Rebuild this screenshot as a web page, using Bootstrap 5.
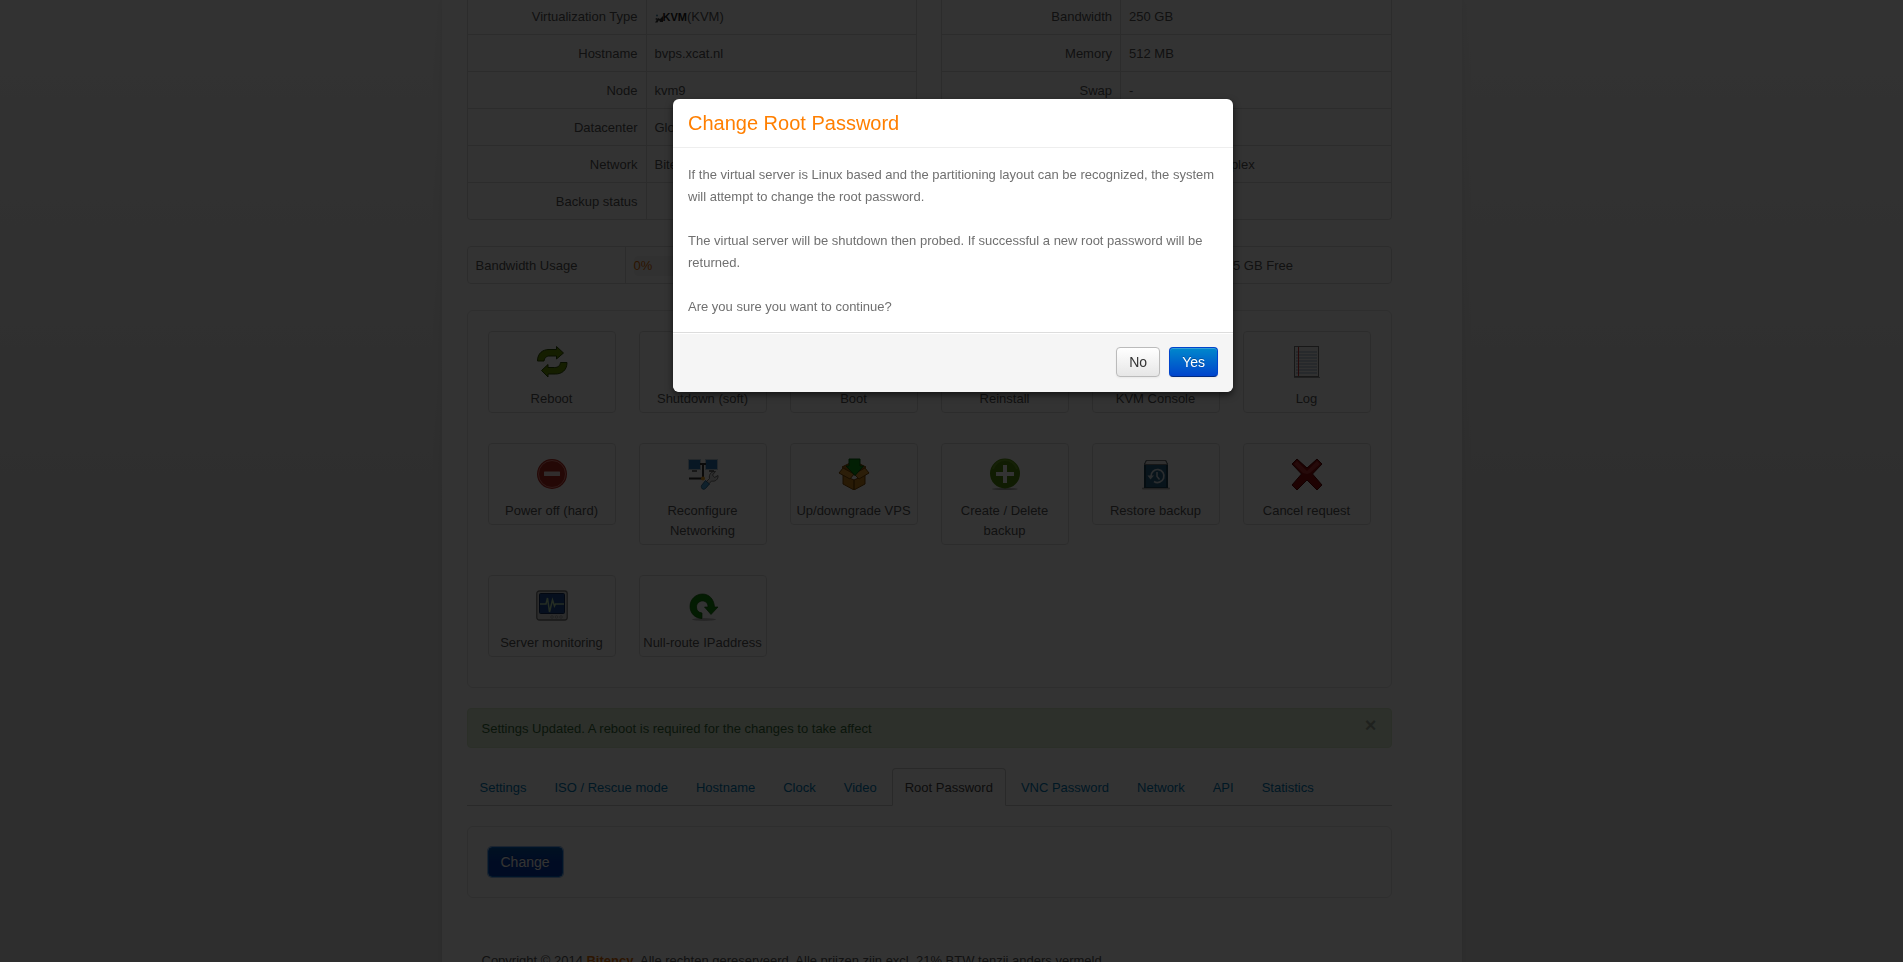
<!DOCTYPE html>
<html lang="en">
<head>
<meta charset="utf-8">
<meta name="viewport" content="width=device-width, initial-scale=1">
<title>Change Root Password</title>
<link href="https://cdn.jsdelivr.net/npm/bootstrap@5.3.0/dist/css/bootstrap.min.css" rel="stylesheet">
<style>
body { font: 13px/20px "Liberation Sans", Arial, sans-serif; color: #555; background: linear-gradient(#fafafa, #e6e6e6 500px, #e6e6e6); min-height: 100vh; }
a { color: #08c; text-decoration: none; }
.page-wrap { max-width: 1020px; background: #fff; box-shadow: 0 0 10px rgba(0,0,0,.08); padding: 0 70px 20px 25px; min-height: 100vh; }
.info-pair { display: grid; grid-template-columns: 1fr 1fr; column-gap: 24px; }
.info-table { border-collapse: separate; border-spacing: 0; width: 100%; border: 1px solid #ddd; border-radius: 4px; table-layout: fixed; }
.info-table th { font-weight: 400; text-align: right; width: 178px; }
.info-table td, .info-table th { padding: 9px 8px 7px; border-top: 1px solid #ddd; height: 37px; }
.info-table td { border-left: 1px solid #ddd; }
.info-table.cut { border-top: 0; border-radius: 0 0 4px 4px; }
.info-table tr:first-child > * { border-top: 0; }
.info-table.cut tr:first-child > * { padding-top: 7px; height: 34px; }
.info-table.usage-table { margin-top: 26px; }
.usage-table tr:first-child > * { height: 36px; }
.usage-table th { width: 157px; text-align: left; }
.usage-table .free-cell { width: 199px; }
.usage-bar { background: #f5f5f5; height: 20px; border-radius: 4px; color: #e06c00; }
.kvm-logo { color: #222; font-size: 11px; font-weight: 700; }
.well-box { border: 1px solid #e3e3e3; border-radius: 6px; padding: 20px; margin-top: 20px; }
.tile-grid { display: grid; grid-template-columns: repeat(6, 1fr); gap: 30px 23px; align-items: start; margin-top: 26px; padding-bottom: 30px; }
.tile { display: block; border: 1px solid #ddd; border-radius: 4px; padding: 14px 3px 3px; color: #555; text-align: center; }
.tile svg { display: block; width: 32px; height: 32px; margin: 0 auto 11px; }
.notice { background: #dff0d8; border: 1px solid #d6e9c6; border-radius: 4px; color: #356b36; padding: 10px 14px 8px; margin-top: 20px; }
.notice-close { background: none; border: 0; padding: 0; line-height: 12px; font-size: 20px; font-weight: 700; color: #000; opacity: .3; }
.setting-tabs { margin-top: 20px; border-bottom: 1px solid #ccc; }
.setting-tabs .nav-link { padding: 9px 12px 7px; border: 1px solid transparent; border-radius: 4px 4px 0 0; margin: 0 2px -1px 0; color: #0077b3; }
.setting-tabs .nav-link.active { color: #444; border-color: #ccc #ccc #fff; background: #fff; }
.btn-old { font-size: 14px; line-height: 20px; padding: 4px 12px; border-radius: 4px; border: 1px solid #bbb; background: linear-gradient(#fff, #e6e6e6); color: #333; box-shadow: inset 0 1px 0 rgba(255,255,255,.2), 0 1px 2px rgba(0,0,0,.05); }
.btn-old.btn-main { color: #fff; border-color: #04c #04c #002a80; background: linear-gradient(#08c, #04c); text-shadow: 0 -1px 0 rgba(0,0,0,.25); }
.btn-old.btn-main.is-focused { background: linear-gradient(#05a, #003ab0 50%); border-color: #06c; box-shadow: 0 0 0 1px #8ab4e8; }
.legal { margin: 53px 15px 0; }
.legal a { color: #e06c00; font-weight: 700; }
.modal { padding-left: 3px; }
.modal-backdrop { --bs-backdrop-opacity: .8; }
.modal-dialog { max-width: 560px; margin: 99px auto 0; }
.modal-content { border: 0; border-radius: 6px; box-shadow: 0 3px 7px rgba(0,0,0,.6); overflow: hidden; color: #707070; }
.modal-header { padding: 9px 15px; border-bottom: 1px solid #eee; }
.modal-title { font-size: 20px; line-height: 30px; font-weight: 400; color: #ff7f00; }
.modal-body { padding: 16px 15px 14px; line-height: 22px; }
.modal-body p { margin: 0 0 22px; }
.modal-body p:last-child { margin: 0; }
.modal-footer { padding: 14px 15px 15px; background: #f5f5f5; border-top: 1px solid #ddd; box-shadow: inset 0 1px 0 #fff; gap: 9px; }
.modal-footer > * { margin: 0; }
</style>
</head>
<body class="modal-open overflow-hidden">
<main class="page-wrap mx-auto">
  <div class="info-pair">
    <table class="info-table cut">
      <tr><th scope="row">Virtualization Type</th><td><span class="kvm-logo"><svg width="8" height="10" viewBox="0 0 8 10" aria-hidden="true"><path d="M0 9.500 3 5l2 1 3-3v6H5L4 7 2.500 9.500z" fill="#333"/><circle cx="2" cy="2.500" r="1" fill="#48a"/><circle cx="1.500" cy="6" r="1" fill="#555"/></svg>KVM</span>(KVM)</td></tr>
      <tr><th scope="row">Hostname</th><td>bvps.xcat.nl</td></tr>
      <tr><th scope="row">Node</th><td>kvm9</td></tr>
      <tr><th scope="row">Datacenter</th><td>Glo</td></tr>
      <tr><th scope="row">Network</th><td>Bite</td></tr>
      <tr><th scope="row">Backup status</th><td></td></tr>
    </table>
    <table class="info-table cut">
      <tr><th scope="row">Bandwidth</th><td>250 GB</td></tr>
      <tr><th scope="row">Memory</th><td>512 MB</td></tr>
      <tr><th scope="row">Swap</th><td>-</td></tr>
      <tr><th scope="row"></th><td></td></tr>
      <tr><th scope="row"></th><td>1000 Mbit Full Duplex</td></tr>
      <tr><th scope="row"></th><td></td></tr>
    </table>
  </div>
  <table class="info-table usage-table">
    <tr><th scope="row">Bandwidth Usage</th><td><div class="usage-bar">0%</div></td><td class="free-cell">249.95 GB Free</td></tr>
  </table>

  <section class="well-box tile-grid">
    <a class="tile" href="#"><svg viewBox="0 0 32 32"><g fill="#6b9600" stroke="#2c4a00" stroke-linejoin="round"><path d="M1.500 15C1.500 7 7 3.500 13 3.500h7.500v-3l7 6.500-7 6v-3H14c-4 0-5.500 2-6 5z"/><path d="M31 16.500c0 8-5.500 11.500-11.500 11.500H12v3l-6.500-6.500 6.500-6v3h6.500c4 0 5.500-2 6-5z"/></g></svg>Reboot</a>
    <a class="tile" href="#"><svg viewBox="0 0 32 32"><circle cx="16" cy="16" r="14" fill="#d9a400"/></svg>Shutdown (soft)</a>
    <a class="tile" href="#"><svg viewBox="0 0 32 32"><path d="M6 3l22 13L6 29z" fill="#4b9b00"/></svg>Boot</a>
    <a class="tile" href="#"><svg viewBox="0 0 32 32"><circle cx="16" cy="16" r="14" fill="#aaa"/></svg>Reinstall</a>
    <a class="tile" href="#"><svg viewBox="0 0 32 32"><rect x="2" y="4" width="28" height="22" fill="#333"/></svg>KVM Console</a>
    <a class="tile" href="#"><svg viewBox="0 0 32 32"><rect x="3.500" y=".5" width="24" height="30" fill="#f4f4f4" stroke="#777"/><path d="M5 6h21M5 9h21M5 12h21M5 15h21M5 18h21M5 21h21M5 24h21M5 27h21" stroke="#8fa9c6"/><path d="M7.500 1v29" stroke="#c33"/><path d="M3 31.500h26" stroke="#999"/></svg>Log</a>

    <a class="tile" href="#"><svg viewBox="0 0 32 32"><circle cx="16" cy="16" r="15" fill="#b52a20"/><circle cx="16" cy="16" r="13.500" fill="none" stroke="#e88078"/><rect x="8" y="13.500" width="16" height="4.500" rx=".5" fill="#f3e0de"/></svg>Power off (hard)</a>
    <a class="tile" href="#"><svg viewBox="0 0 32 32"><g fill="#2b76b5" stroke="#b5c9d8"><rect x="1.500" y="1.500" width="12" height="10"/><rect x="18.500" y="1.500" width="12" height="10"/></g><path d="M5 13h5M22 13h5" stroke="#777" stroke-width="2"/><path d="M16 6v14M13 6h6M2 20.500h14" fill="none" stroke="#333" stroke-width="2"/><path d="M17.500 25.500l5-5c-1-4 2-7.500 6-7l-3 3.500 2 2.500 3.500-2c.5 4-3 6.500-6.500 5.500l-4.500 5z" fill="#ddd" stroke="#555" stroke-width=".8"/><circle cx="16" cy="20.500" r="2" fill="#f0a020"/><path d="M18.500 22.500l4 3.500-4 4.500c-2 2-5 0-4-3z" fill="#4aa3dc" stroke="#1d5578" stroke-width=".8"/></svg>Reconfigure Networking</a>
    <a class="tile" href="#"><svg viewBox="0 0 32 32"><g fill="#c9801c" stroke="#7a4700" stroke-linejoin="round"><path d="M4 9l12-6 12 6-12 8z" fill="#a8650a"/><path d="M5 17l11 5v10L5 26zM27 17l-11 5v10l11-6z"/><path d="M5 10L1 15l11 6 4-5zM27 10l4 5-10 6-5-5z" fill="#dc9830"/></g><path d="M11 1h11v7h3.500L17 17.500 8 8h3z" fill="#0a9a18" stroke="#045c0a"/></svg>Up/downgrade VPS</a>
    <a class="tile" href="#"><svg viewBox="0 0 32 32"><ellipse cx="16" cy="31" rx="13" ry="1" fill="#aaa"/><circle cx="16" cy="15.500" r="15" fill="#508a0c"/><path d="M4 11a12.500 12.500 0 0 1 24 0" fill="none" stroke="#6ca422" stroke-width="2"/><path d="M16 7v18M7 16h18" stroke="#fff" stroke-width="4"/></svg>Create / Delete backup</a>
    <a class="tile" href="#"><svg viewBox="0 0 32 32"><rect x="2" y="29.500" width="28" height="2" rx="1" fill="#aaa"/><path d="M4 6l2-4h20l2 4v24H4z" fill="#1d4358"/><path d="M4.500 6.500l2-4h19l2 4z" fill="#eee" stroke="#777"/><rect x="6" y="7" width="20" height="22" fill="#2b6687"/><path d="M11 18.500a6.500 6.500 0 1 1 3 5" fill="none" stroke="#d5e1e8" stroke-width="1.700"/><path d="M7.500 17.500h6.500l-3.500 4z" fill="#d5e1e8"/><path d="M17 14v4.500l2.500 3" fill="none" stroke="#d5e1e8" stroke-width="1.500"/></svg>Restore backup</a>
    <a class="tile" href="#"><svg viewBox="0 0 32 32"><path d="M1 6L6 1l10 9L26 1l5 5-9.500 10L31 27l-5 5-10-10L6 32l-5-5 9.500-11z" fill="#960c0c" stroke="#540000" stroke-linejoin="round"/><path d="M3 6l3-3 10 10L26 3l3 3-10 9-3 1-4-1z" fill="#b83434"/></svg>Cancel request</a>

    <a class="tile" href="#"><svg viewBox="0 0 32 32"><rect x=".8" y="1" width="30.400" height="29" rx="2.500" fill="#ddd" stroke="#777" stroke-width="1.300"/><rect x="3.500" y="3.500" width="25" height="20" rx="1" fill="#224e94" stroke="#102c58"/><path d="M4 14h6l1.500-6 2 14 3-12 2 6 1-2H28" fill="none" stroke="#b9dfae" stroke-width="1.500"/><g fill="none" stroke="#aaa"><circle cx="16" cy="27" r="1.300"/><circle cx="20.500" cy="27" r="1.300"/><circle cx="25" cy="27" r="1.300"/></g></svg>Server monitoring</a>
    <a class="tile" href="#"><svg viewBox="0 0 32 32"><ellipse cx="17" cy="29.500" rx="12" ry="1.500" fill="#bbb"/><path d="M15 28.500C8 28.500 3 23 3 16.500 3 9 9 4 15.500 4S27 9 27.500 17H31l-7 7.500L17.500 17H21c0-4-2.500-6-5.500-6s-6 2.500-6 6 2 5.500 5.500 6z" fill="#138a0a" stroke="#0c5c06" stroke-width=".7"/></svg>Null-route IPaddress</a>
  </section>

  <div class="notice d-flex justify-content-between align-items-start" role="alert"><span>Settings Updated. A reboot is required for the changes to take affect</span><button type="button" class="notice-close" aria-label="Close">×</button></div>

  <nav class="nav setting-tabs">
    <a class="nav-link" href="#">Settings</a>
    <a class="nav-link" href="#">ISO / Rescue mode</a>
    <a class="nav-link" href="#">Hostname</a>
    <a class="nav-link" href="#">Clock</a>
    <a class="nav-link" href="#">Video</a>
    <a class="nav-link active" aria-current="page" href="#">Root Password</a>
    <a class="nav-link" href="#">VNC Password</a>
    <a class="nav-link" href="#">Network</a>
    <a class="nav-link" href="#">API</a>
    <a class="nav-link" href="#">Statistics</a>
  </nav>
  <section class="well-box"><button type="button" class="btn btn-old btn-main is-focused d-block">Change</button></section>

  <footer class="legal">Copyright © 2014 <a href="#">Bitency</a>. Alle rechten gereserveerd. Alle prijzen zijn excl. 21% BTW tenzij anders vermeld.</footer>
</main>

<div class="modal-backdrop show"></div>
<div class="modal d-block" tabindex="-1" role="dialog" aria-modal="true" aria-labelledby="dlgTitle">
  <div class="modal-dialog"><div class="modal-content">
    <div class="modal-header"><h3 class="modal-title" id="dlgTitle">Change Root Password</h3></div>
    <div class="modal-body">
      <p>If the virtual server is Linux based and the partitioning layout can be recognized, the system will attempt to change the root password.</p>
      <p>The virtual server will be shutdown then probed. If successful a new root password will be returned.</p>
      <p>Are you sure you want to continue?</p>
    </div>
    <div class="modal-footer"><button type="button" class="btn btn-old">No</button><button type="button" class="btn btn-old btn-main">Yes</button></div>
  </div></div>
</div>
<script src="https://cdn.jsdelivr.net/npm/bootstrap@5.3.0/dist/js/bootstrap.bundle.min.js"></script>
</body>
</html>
